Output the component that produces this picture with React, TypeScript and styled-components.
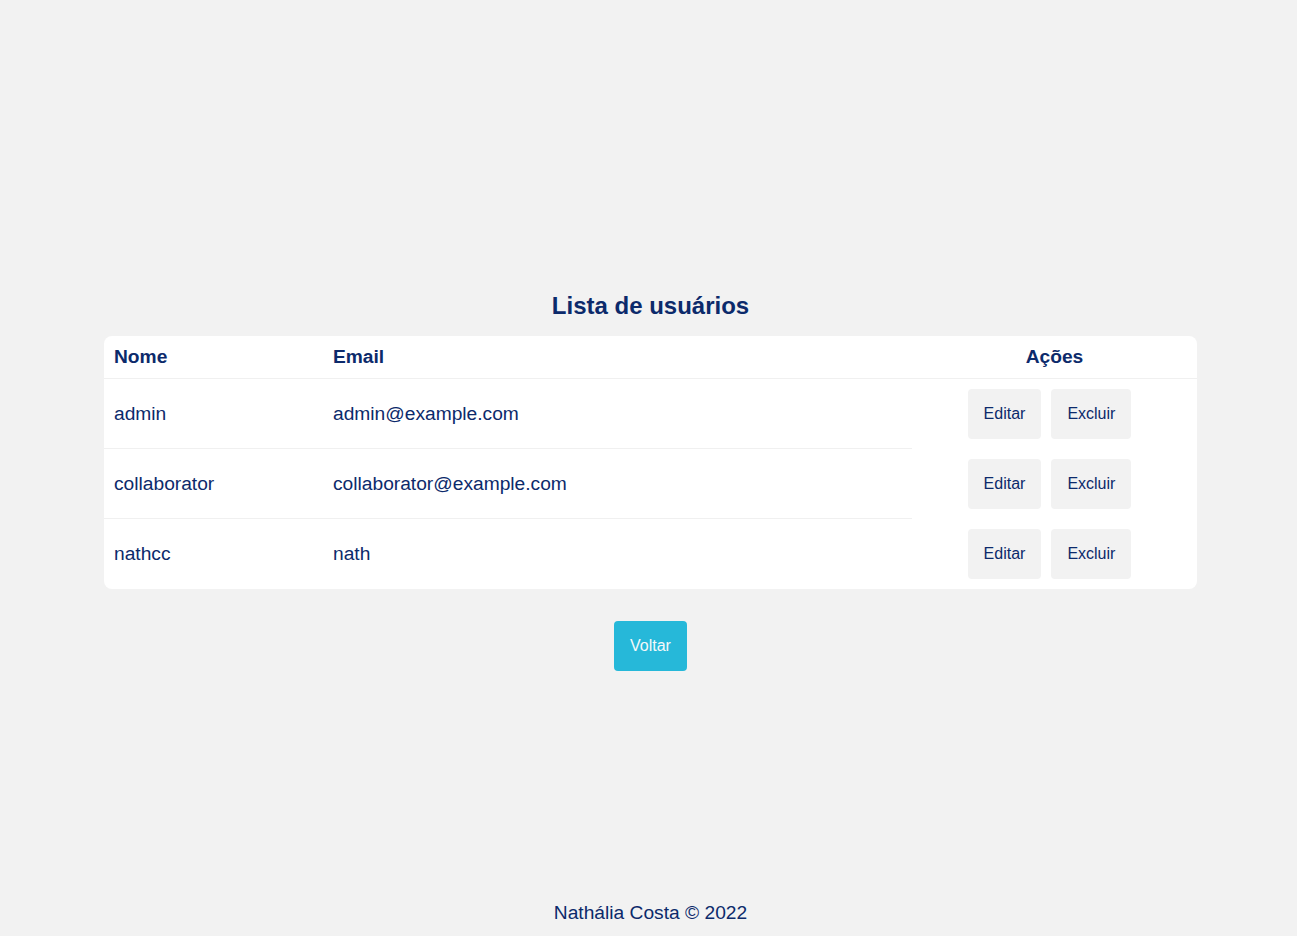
import React from "react";
import styled, { createGlobalStyle } from "styled-components";

const GlobalStyle = createGlobalStyle`
  * { box-sizing: border-box; }
  html, body { margin: 0; padding: 0; }
  body {
    background: #f2f2f2;
    font-family: "Liberation Sans", Arial, sans-serif;
    color: #0c2a6b;
  }
`;

const Page = styled.div`
  min-height: 100vh;
  display: flex;
  flex-direction: column;
`;

const Main = styled.main`
  padding: 292px 100px 0 104px;
  display: flex;
  flex-direction: column;
  align-items: center;
`;

const Title = styled.h1`
  margin: 0 0 16px;
  font-size: 24px;
  line-height: 28px;
  font-weight: 700;
  color: #0c2a6b;
`;

const Card = styled.div`
  width: 1093px;
  background: #ffffff;
  border-radius: 8px;
  overflow: hidden;
`;

const Row = styled.div<{ $header?: boolean }>`
  display: grid;
  grid-template-columns: 219px 589px 1fr;
  border-bottom: ${(p) => (p.$header ? "1px solid #f0f0f0" : "none")};
`;

const HeadCell = styled.div<{ $center?: boolean }>`
  padding: 10px;
  font-size: 19.2px;
  line-height: 22px;
  font-weight: 700;
  text-align: ${(p) => (p.$center ? "center" : "left")};
`;

const Cell = styled.div<{ $last?: boolean }>`
  padding: 0 10px;
  height: 70px;
  display: flex;
  align-items: center;
  font-size: 19.2px;
  border-bottom: ${(p) => (p.$last ? "none" : "1px solid #f0f0f0")};
`;

const ActionCell = styled.div`
  padding: 10px 0;
  display: flex;
  justify-content: center;
`;

const ActionButton = styled.button`
  margin-right: 10px;
  padding: 16px;
  height: 50px;
  border: none;
  border-radius: 4px;
  background: #f2f2f2;
  color: #0c2a6b;
  font-family: "Liberation Sans", Arial, sans-serif;
  font-size: 16px;
  line-height: 18px;
  cursor: pointer;
`;

const BackButton = styled.button`
  margin-top: 32px;
  padding: 16px;
  height: 50px;
  border: none;
  border-radius: 4px;
  background: #26b8d9;
  color: #f4f8fa;
  font-family: "Liberation Sans", Arial, sans-serif;
  font-size: 16px;
  line-height: 18px;
  cursor: pointer;
`;

const Footer = styled.footer`
  margin-top: auto;
  padding: 0 100px 12px 104px;
  text-align: center;
  font-size: 19.2px;
  line-height: 22px;
`;

const users = [
  { name: "admin", email: "admin@example.com" },
  { name: "collaborator", email: "collaborator@example.com" },
  { name: "nathcc", email: "nath" },
];

export default function App() {
  return (
    <Page>
      <GlobalStyle />
      <Main>
        <Title>Lista de usuários</Title>
        <Card>
          <Row $header>
            <HeadCell>Nome</HeadCell>
            <HeadCell>Email</HeadCell>
            <HeadCell $center>Ações</HeadCell>
          </Row>
          {users.map((u, i) => {
            const last = i === users.length - 1;
            return (
              <Row key={u.name}>
                <Cell $last={last}>{u.name}</Cell>
                <Cell $last={last}>{u.email}</Cell>
                <ActionCell>
                  <ActionButton>Editar</ActionButton>
                  <ActionButton>Excluir</ActionButton>
                </ActionCell>
              </Row>
            );
          })}
        </Card>
        <BackButton>Voltar</BackButton>
      </Main>
      <Footer>Nathália Costa © 2022</Footer>
    </Page>
  );
}
